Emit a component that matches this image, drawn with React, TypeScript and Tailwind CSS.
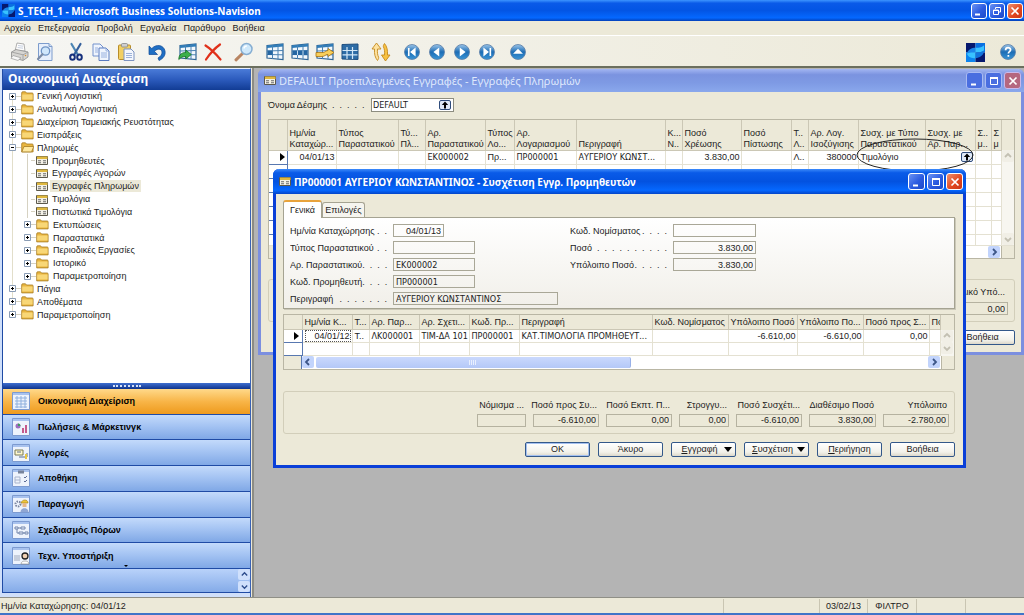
import React from 'react';

const BODY = "font-['Liberation_Sans','DejaVu_Sans',sans-serif]";
const DATA = "font-['DejaVu_Sans_Condensed','DejaVu_Sans',sans-serif]";
const TITLE = "font-['Noto_Sans','Open_Sans',sans-serif]";

/* ---------- toolbar icons ---------- */

function Svg({ children, size = 'size-[20px]' }: { children: React.ReactNode; size?: string }) {
  return (
    <svg viewBox="0 0 20 20" className={size} fill="none" aria-hidden="true">
      {children}
    </svg>
  );
}

const PrintIcon = () => (
  <Svg>
    <path d="M5 9 7 1l7 1 1 7z" fill="#fdfdfd" stroke="#9a9a9a" strokeWidth=".8" />
    <path d="M8 3.500l5 .7M7.600 5.500l5.400.7" stroke="#b9c4d8" strokeWidth=".8" />
    <path d="M1.500 10 6 7.500l12 2.500v5l-5 3.500L1.500 15z" fill="#d6d5d2" stroke="#8b8b8b" strokeWidth=".8" />
    <path d="M1.500 10 13 12.800 18 10M13 12.800v5.500" stroke="#999" strokeWidth=".8" />
    <path d="M3 13.500l8 2.300-3 2.700-7-2.200z" fill="#f7f7f7" stroke="#999" strokeWidth=".7" />
    <circle cx="15.500" cy="13.500" r=".8" fill="#e0912b" />
  </Svg>
);
const PreviewIcon = () => (
  <Svg>
    <path d="M3.500 1.500h10.500l3 3v14H3.500z" fill="#e6eefb" stroke="#7d9ccc" />
    <path d="M14 1.500v3h3" stroke="#7d9ccc" fill="#cfddf3" />
    <circle cx="10.500" cy="9" r="4.200" fill="#cfe6fb" stroke="#6f93c4" strokeWidth="1.300" />
    <path d="M7.500 12.200 3 17" stroke="#7b8ba6" strokeWidth="2.200" strokeLinecap="round" />
  </Svg>
);
const CutIcon = () => (
  <Svg>
    <path d="M5.500 2 12 13" stroke="#4d86b4" strokeWidth="2.200" strokeLinecap="round" />
    <path d="M14.500 2 8 13" stroke="#35609c" strokeWidth="2.200" strokeLinecap="round" />
    <ellipse cx="6.500" cy="15.200" rx="2.300" ry="2.600" stroke="#16307c" strokeWidth="2" />
    <ellipse cx="13.500" cy="15.200" rx="2.300" ry="2.600" stroke="#16307c" strokeWidth="2" />
  </Svg>
);
const CopyIcon = () => (
  <Svg>
    <path d="M2 2h7l3 3v9H2z" fill="#eff4fd" stroke="#7391cc" />
    <path d="M8 6h7l3 3v9.500H8z" fill="#eff4fd" stroke="#5b7cc0" />
    <path d="M15 6v3h3M10 11h6M10 13h6M10 15h6M4 6h3M4 8h3M4 10h3" stroke="#8fa9db" strokeWidth=".9" />
  </Svg>
);
const PasteIcon = () => (
  <Svg>
    <rect x="2.500" y="3" width="12" height="14.500" rx="1" fill="#f2cf63" stroke="#b88d28" />
    <rect x="5.500" y="1.500" width="6" height="3.500" rx="1" fill="#cfcfcf" stroke="#888" strokeWidth=".8" />
    <path d="M8 7h7l3 3v8.500H8z" fill="#f4f7fd" stroke="#7d93c0" />
    <path d="M10 11.500h6M10 13.500h6M10 15.500h6" stroke="#93a9d4" strokeWidth=".9" />
  </Svg>
);
const UndoIcon = () => (
  <Svg>
    <path d="M2 4v8.500h8.500L7.600 9.500c2-3 6.900-3.500 7.400.5.200 2.500-1.500 4.500-4 6l1 2.500c4.500-2 6.800-5.500 6-9.500C17 3 9 1.500 4.800 6.600z" fill="#1f6fc4" stroke="#124b95" strokeWidth=".7" />
  </Svg>
);
function GridBase() {
  return (
    <>
      <path d="M2 3.500 18 2v15.500L2 16z" fill="#f2f8fd" stroke="#2f6596" strokeWidth="1.200" />
      <path d="M2 3.500 18 2v2.500L2 6z" fill="#2f7cb8" />
      <path d="M7.500 3.500v13.500M13 3v14.500M2 9l16-.5M2 12.500l16 .3" stroke="#4b82b3" strokeWidth="1" />
    </>
  );
}
const InsertIcon = () => (
  <Svg>
    <GridBase />
    <path d="M.8 17.500c0-5 3-7 7-7V8l5.500 4.500L7.800 17v-2.500c-3 0-5 .8-7 3z" fill="#3cb04a" stroke="#177026" strokeWidth=".8" />
  </Svg>
);
const DeleteIcon = () => (
  <Svg>
    <path d="M2.500 3.500C8 7 13 12 17.500 17.500M17 2.500C11.500 6.500 7 11.500 3 17.500" stroke="#e0301a" strokeWidth="2.200" strokeLinecap="round" />
  </Svg>
);
const FindIcon = () => (
  <Svg>
    <path d="M8.500 11.500 2 17.800" stroke="#b98562" strokeWidth="3" strokeLinecap="round" />
    <circle cx="12.500" cy="7" r="5.500" fill="#cfe9fb" stroke="#86aed2" strokeWidth="1.500" />
    <path d="M9.800 6.500c.4-1.700 1.600-2.500 3-2.500" stroke="#fff" strokeWidth="1.300" />
  </Svg>
);
const FieldIcon = () => (
  <Svg>
    <GridBase />
    <path d="M2.500 8.500h5v4.500h-5z" fill="#2566a2" />
  </Svg>
);
const RowIcon = () => (
  <Svg>
    <GridBase />
    <path d="M2.500 8.500h15v4.500h-15z" fill="#2566a2" />
    <path d="M7.500 8.500v4.500M13 8.500v4.500" stroke="#c6def0" />
  </Svg>
);
const FlowIcon = () => (
  <Svg>
    <GridBase />
    <path d="M1 10.500h7c2 0 3-2 5-2V6.500l6 4-6 4v-2c-3 0-3 2-6 2H1z" fill="#f8cf5a" stroke="#a97412" strokeWidth=".8" />
  </Svg>
);
const FullGridIcon = () => (
  <Svg>
    <path d="M2 2.500 18 2v15.500L2 17z" fill="#2d6ca6" stroke="#1f4f80" />
    <path d="M7 5v12M12.500 5v12M2.500 8.500h15M2.500 12.800h15" stroke="#d4e8f7" strokeWidth="1.200" />
  </Svg>
);
const SortIcon = () => (
  <Svg>
    <path d="M5.500 1 1 7h2.500c-.3 5 .5 8.500 3 11.500 1-1.500 1.500-2.500 1-3.500-1-2-1.300-5-1-8H10z" fill="#fde2a0" stroke="#c58a1e" strokeWidth=".9" />
    <path d="M14.500 19 19 13h-2.500c.3-5-.5-8.500-3-11.500-1 1.500-1.500 2.500-1 3.500 1 2 1.300 5 1 8H10.500z" fill="#f7c243" stroke="#c58a1e" strokeWidth=".9" />
  </Svg>
);
function Orb({ children }: { children: React.ReactNode }) {
  return (
    <svg viewBox="0 0 20 20" className="size-[18px]" aria-hidden="true">
      <defs>
        <linearGradient id="orb" x1="0" y1="0" x2="0" y2="1">
          <stop offset="0" stopColor="#9cc6ea" />
          <stop offset=".5" stopColor="#1d6db5" />
          <stop offset="1" stopColor="#3a95d6" />
        </linearGradient>
      </defs>
      <circle cx="10" cy="10" r="8.300" fill="url(#orb)" stroke="#5a7da6" strokeWidth=".9" />
      {children}
    </svg>
  );
}
const FirstIcon = () => <Orb><path d="M5.500 5.500h1.800v9H5.500zM14 5v10L7.800 10z" fill="#fff" /></Orb>;
const PrevIcon = () => <Orb><path d="M12.500 5v10L6 10z" fill="#fff" /></Orb>;
const NextIcon = () => <Orb><path d="M7.500 5v10l6.500-5z" fill="#fff" /></Orb>;
const LastIcon = () => <Orb><path d="M12.800 5.500h1.800v9h-1.800zM6 5v10l6.200-5z" fill="#fff" /></Orb>;
const UpIcon = () => <Orb><path d="M4.500 12h11L10 6.500z" fill="#fff" /></Orb>;
const HelpIcon = () => (
  <Orb>
    <path d="M7.300 8c0-3.800 5.600-3.500 5.600-.4 0 2-2.500 2-2.500 4M10.400 13.300v1.900" stroke="#fff" strokeWidth="1.900" fill="none" />
  </Orb>
);
function Logo({ size }: { size: string }) {
  return (
    <svg viewBox="0 0 20 20" className={size} aria-hidden="true">
      <path d="M0 0h10v10H0z" fill="#06186e" />
      <path d="M10 0h10v10H10z" fill="#0a6fe0" />
      <path d="M0 10h10v10H0z" fill="#0d84ee" />
      <path d="M10 10h10v10H10z" fill="#06186e" />
      <path d="M1 11c1-4 5-6 9-6v5c-4 0-7 1-9 1z" fill="#1b86ea" />
      <path d="M10 5c4 0 8-1 9-3v6c-2 2-6 2-9 2z" fill="#39c2ff" />
      <path d="M1 11c2-1 6-1 9-1v6c-4 0-8-1-9-5z" fill="#39c2ff" />
      <path d="M10 10c3 0 7 0 9-2 0 5-5 8-9 8z" fill="#1274dc" />
    </svg>
  );
}
function FormIcon({ size = 'h-[9px] w-[12px]' }: { size?: string }) {
  return (
    <svg viewBox="0 0 12 9" className={size} aria-hidden="true">
      <path d="M.5.5h11v8H.5z" fill="#f3f0e6" stroke="#5c594c" />
      <path d="M1 .500h10.500V3H1z" fill="#dfb840" />
      <path d="M2 4.200h3v1H2zM7 4.200h3v1H7zM2 6.200h3v1H2zM7 6.200h3v1H7z" fill="#6b6b6b" />
    </svg>
  );
}
function Folder({ open }: { open?: boolean }) {
  return (
    <svg viewBox="0 0 13 11" className="h-[11px] w-[13px] shrink-0" aria-hidden="true">
      <path d="M.7 2c0-.8.4-1.200 1-1.200h2.800l1 1.200h5.800c.5 0 .8.400.8.900v7H.7z" fill="#e9b640" stroke="#a67c24" strokeWidth=".8" />
      {open ? (
        <path d="M.8 9.900 3 4.500h9.800L10.500 9.900z" fill="#ffe9a0" stroke="#a67c24" strokeWidth=".8" />
      ) : (
        <path d="M1.200 3.500h10.400v5H1.200z" fill="#f8d777" />
      )}
    </svg>
  );
}

/* ---------- small controls ---------- */

function WinButton({ kind, dim, small }: { kind: 'min' | 'max' | 'restore' | 'close'; dim?: boolean; small?: boolean }) {
  const names = { min: 'Minimize', max: 'Maximize', restore: 'Restore', close: 'Close' };
  const close = kind === 'close';
  const tone = close
    ? dim
      ? 'bg-[#b5677f] border-[#c9b9ec]'
      : 'bg-[linear-gradient(135deg,#f0906f,#e0451d_60%,#c8371a)] border-white'
    : dim
      ? 'bg-[#4a6ee0] border-[#a9baf2]'
      : 'bg-[linear-gradient(135deg,#6b93f4,#2b5be0_55%,#1c49c8)] border-white';
  return (
    <button aria-label={names[kind]} className={`${small ? 'size-[16px]' : 'size-[17px]'} grid shrink-0 place-items-center rounded-[3px] border ${tone}`}>
      <svg viewBox="0 0 12 12" className="size-[12px]" fill="none" stroke="#fff" aria-hidden="true">
        {kind === 'min' && <path d="M2 9.500h5" strokeWidth="2" />}
        {kind === 'max' && <path d="M2 2.500h8M2.500 2v7.500h7V2M2 3.500h8" />}
        {kind === 'restore' && <path d="M4.500 4V2.500h5v4.500H8M2.500 5h5v4.500h-5zM2.500 5.500h5" />}
        {close && <path d="M2.500 2.500l7 7M9.500 2.500l-7 7" strokeWidth="1.700" />}
      </svg>
    </button>
  );
}

function LookupButton() {
  return (
    <button aria-label="Lookup" className="grid h-[10px] w-[12px] shrink-0 place-items-center rounded-[2px] border border-[#2f4c7c] bg-[#dfe9f8]">
      <svg viewBox="0 0 8 8" className="size-[8px]" aria-hidden="true">
        <path d="M4 .5 7.200 4H5v3.500H3V4H.8z" fill="#000" />
      </svg>
    </button>
  );
}

function ArrowButton({ dir, faded }: { dir: 'up' | 'down' | 'left' | 'right'; faded?: boolean }) {
  const paths = { up: 'M2 6l3-3 3 3', down: 'M2 4l3 3 3-3', left: 'M6 2L3 5l3 3', right: 'M4 2l3 3-3 3' };
  return (
    <button aria-label={`Scroll ${dir}`} className={`grid h-[12px] w-[12px] shrink-0 place-items-center rounded-[2px] ${faded ? 'bg-[#f1efe6]' : 'bg-[#c2d4fc]'}`}>
      <svg viewBox="0 0 10 10" className="size-[10px]" fill="none" aria-hidden="true">
        <path d={paths[dir]} stroke={faded ? '#c3c0b2' : '#3d5687'} strokeWidth="1.800" />
      </svg>
    </button>
  );
}

function PushButton({ children, primary, menu }: { children: React.ReactNode; primary?: boolean; menu?: boolean }) {
  return (
    <button
      className={`flex h-[15px] w-[65px] items-center justify-center rounded-[2px] border border-[#33588a] bg-[linear-gradient(#ffffff,#f2f1ea_70%,#dcd8ca)] leading-[13px] ${primary ? 'shadow-[inset_0_0_0_1px_#a4c0f0]' : ''}`}
    >
      <span className={menu ? 'w-[48px] text-center' : ''}>{children}</span>
      {menu && (
        <svg viewBox="0 0 8 5" className="h-[5px] w-[8px]" aria-hidden="true">
          <path d="M0 0h8L4 5z" fill="#000" />
        </svg>
      )}
    </button>
  );
}

/* ---------- sidebar ---------- */

type Node = { label: string; level: 1 | 2; kind: 'closed' | 'open' | 'form'; selected?: boolean };
const tree: Node[] = [
  { label: 'Γενική Λογιστική', level: 1, kind: 'closed' },
  { label: 'Αναλυτική Λογιστική', level: 1, kind: 'closed' },
  { label: 'Διαχείριση Ταμειακής Ρευστότητας', level: 1, kind: 'closed' },
  { label: 'Εισπράξεις', level: 1, kind: 'closed' },
  { label: 'Πληρωμές', level: 1, kind: 'open' },
  { label: 'Προμηθευτές', level: 2, kind: 'form' },
  { label: 'Εγγραφές Αγορών', level: 2, kind: 'form' },
  { label: 'Εγγραφές Πληρωμών', level: 2, kind: 'form', selected: true },
  { label: 'Τιμολόγια', level: 2, kind: 'form' },
  { label: 'Πιστωτικά Τιμολόγια', level: 2, kind: 'form' },
  { label: 'Εκτυπώσεις', level: 2, kind: 'closed' },
  { label: 'Παραστατικά', level: 2, kind: 'closed' },
  { label: 'Περιοδικές Εργασίες', level: 2, kind: 'closed' },
  { label: 'Ιστορικό', level: 2, kind: 'closed' },
  { label: 'Παραμετροποίηση', level: 2, kind: 'closed' },
  { label: 'Πάγια', level: 1, kind: 'closed' },
  { label: 'Αποθέματα', level: 1, kind: 'closed' },
  { label: 'Παραμετροποίηση', level: 1, kind: 'closed' },
];

function Expander({ open }: { open?: boolean }) {
  return (
    <svg viewBox="0 0 7 7" className="size-[7px] shrink-0" aria-hidden="true">
      <path d="M.5.5h6v6h-6z" fill="#fff" stroke="#8b9db5" />
      <path d={open ? 'M2 3.500h3' : 'M2 3.500h3M3.500 2v3'} stroke="#000" />
    </svg>
  );
}

function TreeRow({ node }: { node: Node }) {
  return (
    <li className={`flex items-center ${node.level === 2 ? 'pl-[21px]' : 'pl-[6px]'}`}>
      <span className="grid h-full w-[7px] place-items-center">
        {node.kind !== 'form' ? <Expander open={node.kind === 'open'} /> : <span className="h-full border-l border-[#d6d2c2]" />}
      </span>
      <span className={`h-px bg-[#d6d2c2] ${node.kind === 'form' ? 'mr-[1px] w-[4px]' : 'w-[5px]'}`} />
      {node.kind === 'form' ? <FormIcon /> : <Folder open={node.kind === 'open'} />}
      <a
        href="#"
        className={`ml-[2px] whitespace-nowrap leading-[12px] ${node.level === 2 ? 'pl-[2px]' : 'pl-[1px]'} ${node.selected ? 'bg-[#ece9d8] pr-[2px]' : ''}`}
      >
        {node.label}
      </a>
    </li>
  );
}

const navGlyphs: React.ReactNode[] = [
  <path key="0" d="M3 6h12M3 9h12M3 12h12M3 15h12M5 4v12M9 4v12M13 4v12" stroke="#8fb0dd" />,
  <g key="1"><circle cx="6" cy="8" r="2.500" fill="#9c6fc0" /><path d="M10 15V10h2v5zM13 15V7h2v8z" fill="#c65a8c" /><path d="M6 8V5.500A2.500 2.500 0 0 1 8.500 8z" fill="#3ba05a" /></g>,
  <g key="2"><path d="M3 6h8v5H3z" fill="#fff8cf" stroke="#7a7a55" /><path d="M5 8h4M7 13h8V9" stroke="#5c6c8c" /><path d="M13 10h2v5h-2z" fill="#e9c643" /></g>,
  <g key="3"><path d="M6 1.500h6v3H6z" fill="#77839b" /><path d="M3 8h5v6H3zM3 11h5" stroke="#a9b4cc" /><path d="M12 8l1 1 2-2M12 12l1 1 2-2" stroke="#5d6d96" /></g>,
  <g key="4"><circle cx="6" cy="9" r="2.500" stroke="#7b86a1" strokeDasharray="1.500 1" strokeWidth="2" /><path d="M9 8c1-4 7-4 7 0z" fill="#f0c63a" stroke="#9a7b17" strokeWidth=".6" /><path d="M10.500 8h4v4h-4z" fill="#e7b98c" /><path d="M8.500 17c0-5 8-5 8 0z" fill="#8fa6d4" /></g>,
  <g key="5"><path d="M3 6h3v2H3zM9 6h4v2H9zM7 11h4v2H7zM13 11h3v2h-3z" stroke="#7487ad" /><path d="M6 7h3M11 12h2M5 8v4h2" stroke="#7487ad" /></g>,
  <g key="6"><path d="M3 8v6M5 8v6M7 8v6" stroke="#9fa9bd" /><circle cx="13" cy="9" r="3" fill="#efd0b4" stroke="#222" strokeWidth="1.300" /><path d="M9 17c0-4 8-4 8 0z" fill="#fff" stroke="#888" strokeWidth=".6" /></g>,
];
const nav = ['Οικονομική Διαχείριση', 'Πωλήσεις & Μάρκετινγκ', 'Αγορές', 'Αποθήκη', 'Παραγωγή', 'Σχεδιασμός Πόρων', 'Τεχν. Υποστήριξη'];

function Sidebar() {
  return (
    <aside className="flex w-[251px] shrink-0 flex-col border-r border-t border-r-[#3a62b4] border-t-[#e8eefc] bg-[#cfdffa] pb-[4px] pl-[2px]">
      <div className="flex flex-1 flex-col border-b border-l border-[#1f4ba5]">
        <h2 className={`${TITLE} h-[21px] bg-[linear-gradient(#4a7bd8,#2c5bbd_50%,#123c94)] pl-[5px] text-[12px] font-bold leading-[20px] text-white`}>Οικονομική Διαχείριση</h2>
        <div className="flex-1 bg-white">
          <div className="relative">
            <span className="absolute bottom-[6px] left-[9px] top-[6px] border-l border-[#e2deca]" />
            <ul className="relative grid h-[231px] auto-rows-fr">
              {tree.map((n, i) => <TreeRow key={i} node={n} />)}
            </ul>
          </div>
        </div>
        <div className="grid h-[6px] place-items-center bg-[linear-gradient(#3f6fd0,#0f348c)]">
          <span className="w-[28px] border-t-2 border-dotted border-[#d5e1f8]" />
        </div>
        <nav className="relative grid h-[180px] auto-rows-fr">
          {nav.map((label, i) => (
            <button
              key={label}
              className={`flex items-center border-b border-[#1f4ba5] pl-[9px] text-left font-bold text-black ${i === 0 ? 'bg-[linear-gradient(#ffd98a,#f8b548_50%,#ee9a1d)]' : 'bg-[linear-gradient(#c3dafb,#a5c4f3_45%,#80a8e6)]'}`}
            >
              <svg viewBox="0 0 18 18" className="size-[18px] shrink-0" fill="none" aria-hidden="true">
                <path d="M.5.5h17v17H.5z" fill="#eef3fc" stroke="#7c9ad0" />
                <path d="M1 1h16v2H1z" fill="#a8c2ee" />
                {navGlyphs[i]}
              </svg>
              <span className="pl-[8px]">{label}</span>
            </button>
          ))}
          <svg viewBox="0 0 4 2" className="absolute bottom-[2px] left-[121px] h-[2px] w-[4px]" aria-hidden="true"><path d="M0 0h4L2 2z" fill="#000" /></svg>
        </nav>
        <div className="flex h-[23px] justify-end bg-[linear-gradient(#b9d2fa,#84abe8)]">
          <div className="flex w-[12px] flex-col justify-between">
            {['M2 6l3-3 3 3', 'M2 4l3 3 3-3'].map((d, i) => (
              <button key={d} aria-label={i ? 'More' : 'Fewer'} className="grid h-[11px] place-items-center rounded-[2px] bg-[#cfe0fc]">
                <svg viewBox="0 0 10 10" className="size-[9px]" fill="none" aria-hidden="true"><path d={d} stroke="#2c4c8c" strokeWidth="1.500" /></svg>
              </button>
            ))}
          </div>
        </div>
      </div>
    </aside>
  );
}

/* ---------- journal window ---------- */

type Col = { w: string; h: string[]; v?: string; right?: boolean; caps?: boolean };
const journalCols: Col[] = [
  { w: 'w-[49px]', h: ['Ημ/νία', 'Καταχώρ...'], v: '04/01/13', right: true },
  { w: 'w-[62px]', h: ['Τύπος', 'Παραστατικού'] },
  { w: 'w-[27px]', h: ['Τύ...', 'Πλ...'] },
  { w: 'w-[60px]', h: ['Αρ.', 'Παραστατικού'], v: 'ΕΚ000002', caps: true },
  { w: 'w-[29px]', h: ['Τύπος', 'Λο...'], v: 'Πρ...' },
  { w: 'w-[62px]', h: ['Αρ.', 'Λογαριασμού'], v: 'ΠΡ000001', caps: true },
  { w: 'w-[89px]', h: ['', 'Περιγραφή'], v: 'ΑΥΓΕΡΙΟΥ ΚΩΝΣΤ...', caps: true },
  { w: 'w-[17px]', h: ['Κ...', 'Ν..'] },
  { w: 'w-[59px]', h: ['Ποσό', 'Χρέωσης'], v: '3.830,00', right: true },
  { w: 'w-[50px]', h: ['Ποσό', 'Πίστωσης'] },
  { w: 'w-[17px]', h: ['Τ..', 'Λ..'], v: 'Λ..' },
  { w: 'w-[50px]', h: ['Αρ. Λογ.', 'Ισοζύγισης'], v: '380000', right: true },
  { w: 'w-[67px]', h: ['Συσχ. με Τύπο', 'Παραστατικού'], v: 'Τιμολόγιο' },
  { w: 'w-[50px]', h: ['Συσχ. με', 'Αρ. Παρ...'], v: 'lookup' },
  { w: 'w-[16px]', h: ['Σ..', 'μ..'] },
  { w: 'w-auto', h: ['Σ', 'μ'] },
];

function JournalWindow() {
  return (
    <section className="absolute left-[4px] right-0 top-[1px] flex h-[286px] flex-col rounded-t-[6px] border-x-[3px] border-b-[3px] border-[#7b8fe0] bg-[#ece9d8]">
      <header className="-mx-[3px] flex h-[23px] shrink-0 items-center gap-[2px] rounded-t-[6px] bg-[linear-gradient(#a3b6f2,#7b93e0_25%,#7e9ae4_60%,#8aa8ec)] pl-[6px] pr-[3px]">
        <FormIcon />
        <h3 className={`${TITLE} flex-1 pl-[1px] text-[11px] font-normal text-[#dfe8fc]`}>DEFAULT Προεπιλεγμένες Εγγραφές - Εγγραφές Πληρωμών</h3>
        <WinButton kind="min" dim />
        <WinButton kind="max" dim />
        <WinButton kind="close" dim />
      </header>
      <div className="flex flex-1 flex-col pl-[7px] pr-[6px]">
        <div className="mt-[6px] flex h-[14px] items-center">
          <label htmlFor="batch" className="w-[103px] whitespace-pre">Όνομα Δέσμης  .  .  .  .  .</label>
          <span className="flex h-[14px] w-[83px] items-center border border-[#8d8d80] bg-white pr-[2px]">
            <input id="batch" defaultValue="DEFAULT" className={`${DATA} w-0 flex-1 bg-transparent pl-[1px] outline-none`} />
            <LookupButton />
          </span>
        </div>
        <div className="mt-[7px] flex h-[140px] flex-col border border-[#b9b6a4] bg-white">
          <div className="flex flex-1 overflow-hidden">
            <table className="w-0 flex-1 table-fixed border-collapse">
              <thead>
                <tr className="h-[30px] bg-[#ece9d8] align-bottom">
                  <th className="w-[18px] border-b border-r border-[#cbc7b5]" aria-label="Row" />
                  {journalCols.map((c, i) => (
                    <th key={i} className={`${c.w} overflow-hidden border-b border-r border-[#cbc7b5] p-0 pl-[2px] text-left font-normal`}>
                      {c.h.map((t, j) => <span key={j} className="block h-[11px] whitespace-nowrap leading-[11px]">{t}</span>)}
                    </th>
                  ))}
                </tr>
              </thead>
              <tbody>
                {[0, 1, 2, 3, 4, 5, 6].map((r) => (
                  <tr key={r} className="h-[14px]">
                    <td className="border-b border-r border-b-[#5878b0] border-r-[#5878b0] p-0">
                      {r === 0 && <svg viewBox="0 0 5 8" className="ml-[11px] h-[8px] w-[5px]" aria-hidden="true"><path d="M0 0l5 4-5 4z" fill="#000" /></svg>}
                    </td>
                    {journalCols.map((c, i) => (
                      <td key={i} className={`overflow-hidden whitespace-nowrap border-b border-r border-[#e4e1d2] p-0 leading-[13px] ${c.right ? 'pr-px text-right' : 'pl-[2px]'} ${c.caps ? DATA : ''}`}>
                        {r === 0 && (c.v === 'lookup' ? <span className="flex justify-end pr-[2px]"><LookupButton /></span> : c.v)}
                      </td>
                    ))}
                  </tr>
                ))}
              </tbody>
            </table>
            <div className="flex w-[12px] flex-col justify-between bg-[#f7f6f0]">
              <div className="h-[30px] bg-[#ece9d8]" />
              <ArrowButton dir="up" faded />
              <div className="flex-1" />
              <ArrowButton dir="down" faded />
            </div>
          </div>
          <div className="flex h-[13px] shrink-0 items-center border-t border-[#e4e1d2]">
            <div className="h-full w-[18px] border-r border-[#5878b0] bg-[#ece9d8]" />
            <div className="flex-1" />
            <ArrowButton dir="right" />
            <div className="ml-px h-full w-[13px] border-l border-[#b9b6a4] bg-[#ece9d8]" />
          </div>
        </div>
        <div className="mt-[20px] flex h-[43px] flex-col items-end justify-center gap-[4px] rounded-[3px] border border-[#d2ceba] pr-[6px]">
          <label htmlFor="total" className="pr-[3px] leading-[12px]">Συνολικό Υπό...</label>
          <input id="total" readOnly defaultValue="0,00" className="h-[13px] w-[66px] border border-[#b5b2a0] bg-transparent px-[2px] text-right" />
        </div>
        <div className="mt-[8px] flex justify-end"><PushButton>Βοήθεια</PushButton></div>
      </div>
    </section>
  );
}

/* ---------- application window ---------- */

function Field({ id, label, dots, value, width, right, caps }: { id: string; label: string; dots: string; value?: string; width: string; right?: boolean; caps?: boolean }) {
  return (
    <div className="flex h-[17px] items-center">
      <label htmlFor={id} className="flex w-[103px] justify-between overflow-hidden whitespace-pre pr-[6px]">
        <span>{label}</span>
        <span>{dots}</span>
      </label>
      <input id={id} readOnly defaultValue={value} className={`h-[13px] border border-[#a9a797] bg-transparent px-[2px] outline-none ${width} ${right ? 'text-right' : ''} ${caps ? DATA : ''}`} />
    </div>
  );
}

const entryCols: Col[] = [
  { w: 'w-[50px]', h: ['Ημ/νία Κ...'], v: '04/01/12', right: true },
  { w: 'w-[17px]', h: ['Τ...'], v: 'Τ..' },
  { w: 'w-[50px]', h: ['Αρ. Παρ...'], v: 'ΛΚ000001', caps: true },
  { w: 'w-[50px]', h: ['Αρ. Σχετι...'], v: 'ΤΙΜ-ΔΑ 101', caps: true },
  { w: 'w-[50px]', h: ['Κωδ. Πρ...'], v: 'ΠΡ000001', caps: true },
  { w: 'w-[133px]', h: ['Περιγραφή'], v: 'ΚΑΤ.ΤΙΜΟΛΟΓΙΑ ΠΡΟΜΗΘΕΥΤ...', caps: true },
  { w: 'w-[76px]', h: ['Κωδ. Νομίσματος'] },
  { w: 'w-[69px]', h: ['Υπόλοιπο Ποσό'], v: '-6.610,00', right: true },
  { w: 'w-[66px]', h: ['Υπόλοιπο Πο...'], v: '-6.610,00', right: true },
  { w: 'w-[66px]', h: ['Ποσό προς Σ...'], v: '0,00', right: true },
  { w: 'w-auto', h: ['Πο'] },
];

const totals: [string, string, string][] = [
  ['Νόμισμα ...', '', 'w-[49px]'],
  ['Ποσό προς Συ...', '-6.610,00', 'w-[66px]'],
  ['Ποσό Εκπτ. Π...', '0,00', 'w-[66px]'],
  ['Στρογγυ...', '0,00', 'w-[50px]'],
  ['Ποσό Συσχέτι...', '-6.610,00', 'w-[66px]'],
  ['Διαθέσιμο Ποσό', '3.830,00', 'w-[67px]'],
  ['Υπόλοιπο', '-2.780,00', 'w-[66px]'],
];

function ApplyWindow() {
  return (
    <section className="absolute left-[19px] top-[101px] flex w-[693px] flex-col rounded-t-[6px] border-x-[3px] border-b-[3px] border-[#0a3fd8] bg-[#ece9d8] pb-[8px]">
      <header className="-mx-[3px] flex h-[25px] items-center gap-[2px] rounded-t-[6px] bg-[linear-gradient(#3d8bfa,#0a5be8_15%,#0352e0_50%,#0568ff_85%,#0445c8)] pl-[6px] pr-[3px]">
        <FormIcon />
        <h3 className={`${TITLE} flex-1 pl-[1px] text-[10px] font-bold text-white`}>ΠΡ000001 ΑΥΓΕΡΙΟΥ ΚΩΝΣΤΑΝΤΙΝΟΣ - Συσχέτιση Εγγρ. Προμηθευτών</h3>
        <WinButton kind="min" />
        <WinButton kind="max" />
        <WinButton kind="close" />
      </header>
      <div className="pl-[7px] pr-[8px] pt-[6px]">
        <div className="flex items-end" role="tablist">
          <button role="tab" aria-selected="true" className="relative z-10 -mb-px h-[18px] w-[39px] rounded-t-[3px] border border-b-0 border-t-2 border-[#a5a392] border-t-[#e8a33c] bg-white leading-[15px]">Γενικά</button>
          <button role="tab" aria-selected="false" className="h-[15px] w-[43px] rounded-t-[3px] border border-b-0 border-[#a5a392] bg-[#f6f5ef] leading-[14px]">Επιλογές</button>
        </div>
        <div className="flex h-[92px] border border-[#a5a392] bg-[linear-gradient(#ffffff,#f1efe9)] pl-[6px] pt-[4px] shadow-[1px_1px_0_#cbc8b8]">
          <div className="w-[280px]">
            <Field id="f1" label="Ημ/νία Καταχώρησης" dots=".  ." value="04/01/13" width="w-[51px]" right />
            <Field id="f2" label="Τύπος Παραστατικού" dots=".  ." width="w-[82px]" />
            <Field id="f3" label="Αρ. Παραστατικού" dots=".  .  .  ." value="ΕΚ000002" width="w-[82px]" caps />
            <Field id="f4" label="Κωδ. Προμηθευτή" dots=".  .  .  ." value="ΠΡ000001" width="w-[82px]" caps />
            <Field id="f5" label="Περιγραφή" dots=".  .  .  .  .  .  ." value="ΑΥΓΕΡΙΟΥ ΚΩΝΣΤΑΝΤΙΝΟΣ" width="w-[165px]" caps />
          </div>
          <div>
            <Field id="f6" label="Κωδ. Νομίσματος" dots=".  .  .  ." width="w-[83px]" />
            <Field id="f7" label="Ποσό" dots=".  .  .  .  .  .  .  .  .  ." value="3.830,00" width="w-[83px]" right />
            <Field id="f8" label="Υπόλοιπο Ποσό" dots=".  .  .  .  ." value="3.830,00" width="w-[83px]" right />
          </div>
        </div>
        <div className="mt-[5px] border border-[#b9b6a4] bg-white">
          <div className="flex">
            <table className="w-0 flex-1 table-fixed border-collapse">
              <thead>
                <tr className="h-[14px] bg-[#ece9d8]">
                  <th className="w-[18px] border-b border-r border-[#cbc7b5]" aria-label="Row" />
                  {entryCols.map((c, i) => (
                    <th key={i} className={`${c.w} overflow-hidden whitespace-nowrap border-b border-r border-[#cbc7b5] p-0 pl-[2px] text-left font-normal leading-[12px]`}>{c.h[0]}</th>
                  ))}
                </tr>
              </thead>
              <tbody>
                {[0, 1].map((r) => (
                  <tr key={r} className="h-[13px]">
                    <td className="border-b border-r border-[#5878b0] p-0">
                      {r === 0 && <svg viewBox="0 0 5 8" className="ml-[10px] h-[8px] w-[5px]" aria-hidden="true"><path d="M0 0l5 4-5 4z" fill="#000" /></svg>}
                    </td>
                    {entryCols.map((c, i) => (
                      <td key={i} className={`overflow-hidden whitespace-nowrap border-b border-r border-[#e4e1d2] p-0 leading-[12px] ${c.right ? 'pr-px text-right' : 'pl-[2px]'} ${c.caps ? DATA : ''}`}>
                        {r === 0 && (i === 0 ? <span className="ml-[2px] block border border-dotted border-[#555] leading-[10px]">{c.v}</span> : c.v)}
                      </td>
                    ))}
                  </tr>
                ))}
              </tbody>
            </table>
            <div className="flex w-[13px] flex-col bg-[#f7f6f0]">
              <div className="h-[15px] bg-[#ece9d8]" />
              <ArrowButton dir="up" faded />
              <ArrowButton dir="down" faded />
            </div>
          </div>
          <div className="flex h-[13px] items-center">
            <div className="h-full w-[18px] border-r border-[#5878b0] bg-[#ece9d8]" />
            <ArrowButton dir="left" />
            <div className="ml-[2px] grid h-[11px] w-[47%] place-items-center rounded-[2px] border-r border-[#98b0e8] bg-[linear-gradient(#cad9fd,#b4c8f8)]">
              <svg viewBox="0 0 7 5" className="h-[5px] w-[7px]" aria-hidden="true"><path d="M.5 0v5M2.500 0v5M4.500 0v5M6.500 0v5" stroke="#e8effe" /></svg>
            </div>
            <div className="min-w-0 flex-1" />
            <ArrowButton dir="right" />
            <div className="ml-px h-full w-[13px] border-l border-[#b9b6a4] bg-[#ece9d8]" />
          </div>
        </div>
        <div className="mt-[21px] flex h-[43px] items-end justify-end gap-[7px] rounded-[3px] border border-[#d2ceba] pb-[6px] pr-[5px]">
          {totals.map(([label, value, w], i) => (
            <div key={label} className={`flex flex-col items-end ${w}`}>
              <label htmlFor={`t${i}`} className="mb-[2px] whitespace-nowrap pr-[2px] leading-[13px]">{label}</label>
              <input id={`t${i}`} readOnly defaultValue={value} className="h-[13px] w-full border border-[#b5b2a0] bg-transparent px-[2px] text-right outline-none" />
            </div>
          ))}
        </div>
        <div className="mt-[8px] flex justify-end gap-[8px]">
          <PushButton primary>OK</PushButton>
          <PushButton>Άκυρο</PushButton>
          <PushButton menu><u>Ε</u>γγραφή</PushButton>
          <PushButton menu><u>Σ</u>υσχέτιση</PushButton>
          <PushButton><u>Π</u>εριήγηση</PushButton>
          <PushButton>Βοήθεια</PushButton>
        </div>
      </div>
    </section>
  );
}

/* ---------- shell ---------- */

const toolGroups: [string, React.FC][][] = [
  [['Print', PrintIcon], ['Preview', PreviewIcon]],
  [['Cut', CutIcon], ['Copy', CopyIcon], ['Paste', PasteIcon]],
  [['Undo', UndoIcon]],
  [['Insert', InsertIcon], ['Delete', DeleteIcon]],
  [['Find', FindIcon]],
  [['Field filter', FieldIcon], ['Table filter', RowIcon], ['Flow filter', FlowIcon], ['Show all', FullGridIcon]],
  [['Sort', SortIcon]],
  [['First', FirstIcon], ['Previous', PrevIcon], ['Next', NextIcon], ['Last', LastIcon]],
  [['List', UpIcon]],
];

export default function App() {
  return (
    <div className={`${BODY} flex min-h-screen flex-col overflow-hidden bg-[#ece9d8] text-[9px] leading-[12px] text-[#1c1c1c]`}>
      <header className="flex h-[21px] shrink-0 items-center bg-[linear-gradient(#3d95ff,#0a5ae8_15%,#0355e4_50%,#0468ff_85%,#0340b8)] pl-[2px] pr-[1px]">
        <Logo size="size-[13px]" />
        <h1 className={`${TITLE} flex-1 pl-[3px] text-[10px] font-bold text-white`}>S_TECH_1 - Microsoft Business Solutions-Navision</h1>
        <div className="flex gap-[2px]">
          <WinButton kind="min" small />
          <WinButton kind="restore" small />
          <WinButton kind="close" small />
        </div>
      </header>
      <nav className="flex h-[15px] shrink-0 items-center gap-[7px] border-b border-white pl-[4px]">
        {['Αρχείο', 'Επεξεργασία', 'Προβολή', 'Εργαλεία', 'Παράθυρο', 'Βοήθεια'].map((m) => <button key={m}>{m}</button>)}
      </nav>
      <div className="flex h-[32px] shrink-0 items-center gap-[6px] border-b-2 border-[#6b6f5e] bg-[linear-gradient(90deg,#f6f6f3,#ece9d8)] pl-[7px] pr-[4px] pt-[2px]">
        {toolGroups.map((g, i) => (
          <div key={i} className="flex">
            {g.map(([name, Icon]) => (
              <button key={name} aria-label={name} className="grid h-[24px] w-[25px] place-items-center"><Icon /></button>
            ))}
          </div>
        ))}
        <div className="ml-auto flex items-center gap-[10px]">
          <Logo size="size-[19px]" />
          <button aria-label="Help" className="grid h-[24px] w-[25px] place-items-center"><HelpIcon /></button>
        </div>
      </div>
      <div className="flex flex-1">
        <Sidebar />
        <main className="relative ml-[1px] flex-1 overflow-hidden border-l-2 border-[#8c8c84] bg-[#b4b4b4]">
          <div className="absolute inset-0">
            <JournalWindow />
            <svg viewBox="0 0 118 34" className="pointer-events-none absolute left-[602px] top-[70px] h-[34px] w-[118px]" fill="none" aria-hidden="true">
              <ellipse cx="59" cy="17" rx="58" ry="16" stroke="#222" />
            </svg>
            <ApplyWindow />
          </div>
        </main>
      </div>
      <footer className="flex h-[18px] shrink-0 items-center border-b-2 border-t border-b-[#3f74c8] border-t-[#8f8f86] pl-[1px] pt-[1px]">
        <span className="flex-1">Ημ/νία Καταχώρησης: 04/01/12</span>
        <span className="h-[14px] w-[96px] border-l border-[#c9c5b2]" />
        <span className="h-[14px] w-[48px] border-l border-[#c9c5b2] text-center leading-[14px]">03/02/13</span>
        <span className="h-[14px] w-[49px] border-l border-[#c9c5b2] text-center leading-[14px]">ΦΙΛΤΡΟ</span>
        <span className="h-[14px] w-[49px] border-l border-[#c9c5b2]" />
        <span className="h-[14px] w-[59px] border-l border-[#c9c5b2]" />
      </footer>
    </div>
  );
}
